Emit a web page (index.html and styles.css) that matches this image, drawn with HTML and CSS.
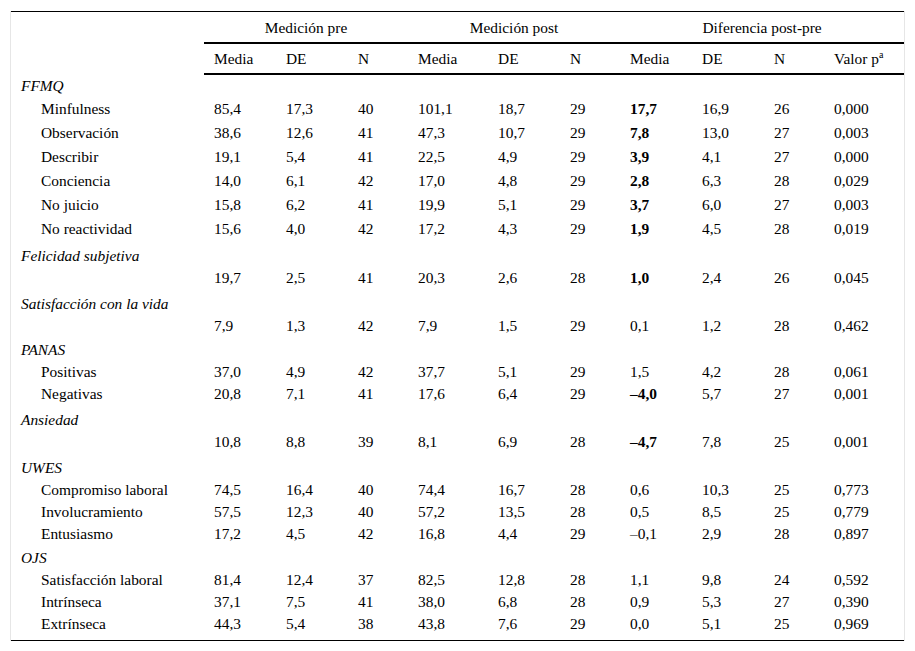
FILE: index.html
```html
<!DOCTYPE html>
<html lang="es">
<head>
<meta charset="utf-8">
<title>Tabla</title>
<link rel="stylesheet" href="styles.css">
</head>
<body>
<div class="frame">
<table class="tbl">
<colgroup>
<col class="c-label"><col class="c72"><col class="c72"><col class="c60"><col class="c80"><col class="c72"><col class="c60"><col class="c72"><col class="c72"><col class="c60"><col class="c80">
</colgroup>
<thead>
<tr class="h1">
<th class="blank" rowspan="2"></th>
<th class="grp" colspan="3">Medición pre</th>
<th class="grp" colspan="3">Medición post</th>
<th class="grp" colspan="4">Diferencia post-pre</th>
</tr>
<tr class="h2">
<th>Media</th><th>DE</th><th>N</th>
<th>Media</th><th>DE</th><th>N</th>
<th>Media</th><th>DE</th><th>N</th><th>Valor p<sup>a</sup></th>
</tr>
</thead>
<tbody>
<tr class="cat first"><td class="cname" colspan="11">FFMQ</td></tr>
<tr class="r24"><td class="sub">Minfulness</td><td>85,4</td><td>17,3</td><td>40</td><td>101,1</td><td>18,7</td><td>29</td><td><b>17,7</b></td><td>16,9</td><td>26</td><td>0,000</td></tr>
<tr class="r24"><td class="sub">Observación</td><td>38,6</td><td>12,6</td><td>41</td><td>47,3</td><td>10,7</td><td>29</td><td><b>7,8</b></td><td>13,0</td><td>27</td><td>0,003</td></tr>
<tr class="r24"><td class="sub">Describir</td><td>19,1</td><td>5,4</td><td>41</td><td>22,5</td><td>4,9</td><td>29</td><td><b>3,9</b></td><td>4,1</td><td>27</td><td>0,000</td></tr>
<tr class="r24"><td class="sub">Conciencia</td><td>14,0</td><td>6,1</td><td>42</td><td>17,0</td><td>4,8</td><td>29</td><td><b>2,8</b></td><td>6,3</td><td>28</td><td>0,029</td></tr>
<tr class="r24"><td class="sub">No juicio</td><td>15,8</td><td>6,2</td><td>41</td><td>19,9</td><td>5,1</td><td>29</td><td><b>3,7</b></td><td>6,0</td><td>27</td><td>0,003</td></tr>
<tr class="r24"><td class="sub">No reactividad</td><td>15,6</td><td>4,0</td><td>42</td><td>17,2</td><td>4,3</td><td>29</td><td><b>1,9</b></td><td>4,5</td><td>28</td><td>0,019</td></tr>

<tr class="cat"><td class="cname" colspan="11">Felicidad subjetiva</td></tr>
<tr><td class="sub"></td><td>19,7</td><td>2,5</td><td>41</td><td>20,3</td><td>2,6</td><td>28</td><td><b>1,0</b></td><td>2,4</td><td>26</td><td>0,045</td></tr>

<tr class="cat"><td class="cname" colspan="11">Satisfacción con la vida</td></tr>
<tr><td class="sub"></td><td>7,9</td><td>1,3</td><td>42</td><td>7,9</td><td>1,5</td><td>29</td><td>0,1</td><td>1,2</td><td>28</td><td>0,462</td></tr>

<tr class="cat c24"><td class="cname" colspan="11">PANAS</td></tr>
<tr><td class="sub">Positivas</td><td>37,0</td><td>4,9</td><td>42</td><td>37,7</td><td>5,1</td><td>29</td><td>1,5</td><td>4,2</td><td>28</td><td>0,061</td></tr>
<tr><td class="sub">Negativas</td><td>20,8</td><td>7,1</td><td>41</td><td>17,6</td><td>6,4</td><td>29</td><td><b>–4,0</b></td><td>5,7</td><td>27</td><td>0,001</td></tr>

<tr class="cat"><td class="cname" colspan="11">Ansiedad</td></tr>
<tr><td class="sub"></td><td>10,8</td><td>8,8</td><td>39</td><td>8,1</td><td>6,9</td><td>28</td><td><b>–4,7</b></td><td>7,8</td><td>25</td><td>0,001</td></tr>

<tr class="cat"><td class="cname" colspan="11">UWES</td></tr>
<tr><td class="sub">Compromiso laboral</td><td>74,5</td><td>16,4</td><td>40</td><td>74,4</td><td>16,7</td><td>28</td><td>0,6</td><td>10,3</td><td>25</td><td>0,773</td></tr>
<tr><td class="sub">Involucramiento</td><td>57,5</td><td>12,3</td><td>40</td><td>57,2</td><td>13,5</td><td>28</td><td>0,5</td><td>8,5</td><td>25</td><td>0,779</td></tr>
<tr><td class="sub">Entusiasmo</td><td>17,2</td><td>4,5</td><td>42</td><td>16,8</td><td>4,4</td><td>29</td><td>–0,1</td><td>2,9</td><td>28</td><td>0,897</td></tr>

<tr class="cat c24"><td class="cname" colspan="11">OJS</td></tr>
<tr><td class="sub">Satisfacción laboral</td><td>81,4</td><td>12,4</td><td>37</td><td>82,5</td><td>12,8</td><td>28</td><td>1,1</td><td>9,8</td><td>24</td><td>0,592</td></tr>
<tr><td class="sub">Intrínseca</td><td>37,1</td><td>7,5</td><td>41</td><td>38,0</td><td>6,8</td><td>28</td><td>0,9</td><td>5,3</td><td>27</td><td>0,390</td></tr>
<tr class="last"><td class="sub">Extrínseca</td><td>44,3</td><td>5,4</td><td>38</td><td>43,8</td><td>7,6</td><td>29</td><td>0,0</td><td>5,1</td><td>25</td><td>0,969</td></tr>
</tbody>
</table>
</div>
</body>
</html>
```

FILE: styles.css
```css
html, body {
  margin: 0;
  padding: 0;
  background: #fff;
}
body {
  font-family: "Liberation Serif", "Times New Roman", serif;
  font-size: 15.4px;
  color: #000;
}
.frame {
  margin: 11px 0 0 10px;
  width: 893px;
  border-left: 1px solid #e6e6e6;
  border-right: 1px solid #e6e6e6;
}
.tbl {
  width: 893px;
  border-collapse: collapse;
  table-layout: fixed;
  border-top: 1px solid #000;
  border-bottom: 1px solid #000;
}
.c-label { width: 193px; }
.c72 { width: 72px; }
.c60 { width: 60px; }
.c80 { width: 80px; }

.tbl th, .tbl td {
  padding: 0 0 0 10px;
  text-align: left;
  font-weight: normal;
  white-space: nowrap;
  line-height: 22px;
  vertical-align: bottom;
}
.tbl .h1 th {
  height: 28px;
  vertical-align: middle;
  padding-top: 2px;
}
.tbl .h1 .grp {
  text-align: center;
  padding-left: 0;
  border-bottom: 2px solid #000;
}
.tbl .h2 th {
  height: 29px;
  vertical-align: middle;
  border-bottom: 2px solid #000;
}
.tbl sup {
  font-size: 0.65em;
  line-height: 0;
  vertical-align: 0.6em;
}
.tbl .cname {
  font-style: italic;
  height: 26px;
}
.tbl .c24 .cname { height: 24px; }
.tbl .first .cname { height: 20px; }
.tbl .sub { padding-left: 30px; }
.tbl .r24 td { height: 24px; vertical-align: middle; }
.tbl .last td { height: 27px; vertical-align: top; }
b { font-weight: bold; }
```
